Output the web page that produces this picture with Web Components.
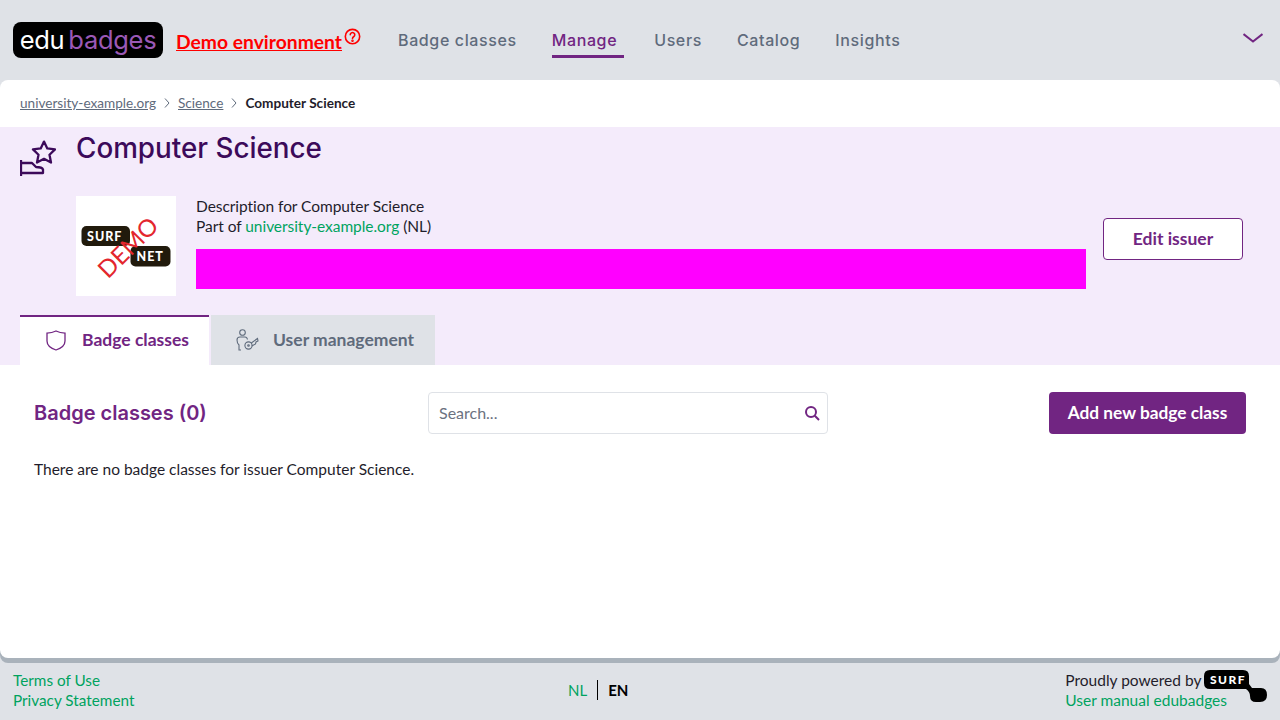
<!DOCTYPE html>
<html lang="en">
<head>
<meta charset="utf-8">
<title>edubadges</title>
<style>
  html, body { margin: 0; height: 100%; }
  body { background: #dfe2e7; font-family: Lato, sans-serif; color: #1f1d2b; }
</style>
</head>
<body>
<eb-app>
  <eb-header slot="header"></eb-header>
  <eb-breadcrumb slot="main"></eb-breadcrumb>
  <eb-hero slot="main"></eb-hero>
  <eb-badge-list slot="main"></eb-badge-list>
  <eb-footer slot="footer"></eb-footer>
</eb-app>

<script>
const BODY_FONT = 'Lato, sans-serif';
const HEAD_FONT = 'Inter, sans-serif';

// helper, every element has the same shadow setup
class Base extends HTMLElement {
  constructor() {
    super();
    this.attachShadow({ mode: 'open' });
  }
  connectedCallback() {
    this.shadowRoot.innerHTML = this.render();
  }
}

class EbApp extends Base {
  render() {
    return `
      <style>
        :host { display: flex; flex-direction: column; height: 100vh; overflow: hidden; }
        main {
          flex: 1; display: flex; flex-direction: column; min-height: 0;
          background: #fff; border-radius: 8px; box-shadow: 0 5px 0 #a9b2bb;
        }
      </style>
      <slot name="header"></slot>
      <main><slot name="main"></slot></main>
      <slot name="footer"></slot>
    `;
  }
}

class EbHeader extends Base {
  render() {
    const items = ['Badge classes', 'Manage', 'Users', 'Catalog', 'Insights'];
    return `
      <style>
        :host { display: flex; align-items: center; height: 80px; padding: 0 17px 0 13px; flex: none; }
        .logo {
          width: 150px; height: 36px; background: #000; border-radius: 8px; box-sizing: border-box;
          display: flex; align-items: center; justify-content: center; gap: 4px;
          font: 400 25.5px/36px ${HEAD_FONT}; letter-spacing: -.3px;
        }
        .logo b { font-weight: 400; color: #fff; }
        .logo i { font-style: normal; color: #9b59b6; }
        .demo {
          margin-left: 13px; width: 184px; display: flex; align-items: flex-start; padding-top: 3px;
          font: 700 19.3px/26px ${BODY_FONT}; color: #f00;
        }
        .demo span { text-decoration: underline; white-space: nowrap; }
        .demo svg { margin: -1px 0 0 2px; flex: none; }
        nav { display: flex; gap: 35px; margin-left: 38px; }
        nav a {
          font: 500 16px/22px ${HEAD_FONT}; letter-spacing: .62px; color: #5f6b7c;
          padding: 0 0 4px; border-bottom: 3px solid transparent; margin-top: 7px;
        }
        nav a.on { color: #712582; border-color: #712582; padding-right: 7px; margin-right: -5px; }
        .chev { margin-left: auto; margin-top: -5px; }
      </style>
      <div class="logo"><b>edu</b><i>badges</i></div>
      <div class="demo"><span>Demo environment</span>
        <svg width="17" height="17" viewBox="0 0 18 18" fill="none" stroke="#f00" stroke-width="1.7">
          <circle cx="9" cy="9" r="7.6"/>
          <path d="M6.6 7.2a2.4 2.4 0 1 1 3.6 2.1c-.8.5-1.2.9-1.2 1.8" stroke-linecap="round"/>
          <circle cx="9" cy="13.4" r=".5" fill="#f00"/>
        </svg>
      </div>
      <nav>${items.map(t => `<a class="${t === 'Manage' ? 'on' : ''}">${t}</a>`).join('')}</nav>
      <svg class="chev" width="20" height="10" viewBox="0 0 20 10" fill="none" stroke="#712582" stroke-width="2">
        <path d="M0.5 1 L10 8.5 L19.5 1"/>
      </svg>
    `;
  }
}

class EbBreadcrumb extends Base {
  render() {
    const chev = `<svg width="6" height="10" viewBox="0 0 6 10" fill="none" stroke="#5f6b7c" stroke-width="1"><path d="M1 .5 L5 5 L1 9.5"/></svg>`;
    return `
      <style>
        :host {
          display: flex; align-items: center; gap: 8px; height: 46px; padding: 0 20px 1px; flex: none;
          font: 400 13.6px/16px ${BODY_FONT}; color: #5f6b7c;
        }
        a { text-decoration: underline; }
        b { color: #1f1d2b; font-weight: 700; }
      </style>
      <a>university-example.org</a>${chev}<a>Science</a>${chev}<b>Computer Science</b>
    `;
  }
}

class EbHero extends Base {
  render() {
    return `
      <style>
        :host { display: block; background: #f4ebfb; height: 238px; flex: none; }
        .head { display: flex; height: 69px; padding-left: 20px; }
        .head svg { margin-top: 13px; }
        h1 { margin: 3px 0 0 20px; font: 500 27.8px/36px ${HEAD_FONT}; color: #3c0a5a; }
        .body { display: flex; padding: 0 37px 0 76px; height: 100px; gap: 20px; }
        .logo { width: 100px; height: 100px; background: #fff; flex: none; }
        .info { flex: 1; font: 400 15.5px/20px ${BODY_FONT}; letter-spacing: -.05px; }
        .info a { color: #00a35f; }
        .mag { height: 40px; background: #f0f; margin-top: 13px; }
        .edit {
          flex: none; width: 140px; height: 42px; box-sizing: border-box; margin: 22px 0 0 -3px;
          background: #fff; border: 1px solid #712582; border-radius: 4px; color: #712582;
          font: 700 17.5px/40px ${BODY_FONT}; text-align: center;
        }
        .tabs { display: flex; gap: 2px; padding: 19px 0 0 20px; }
        .tab {
          height: 50px; box-sizing: border-box; display: flex; align-items: center;
          font: 700 17.5px/22px ${BODY_FONT};
        }
        .tab.on { width: 189px; background: #fff; border-top: 2px solid #712582; color: #712582; padding: 0 0 2px 26px; gap: 16px; }
        .tab.off { width: 224px; background: #dfe2e7; color: #5f6b7c; padding-left: 25px; gap: 14px; }
      </style>
      <div class="head">
        <svg width="36" height="38" viewBox="0 0 36 38" fill="none" stroke="#3c0a5a" stroke-width="2.3" stroke-linejoin="round">
          <path d="M24 1.6 L27.3 8.4 L35 9.4 L29.5 14.8 L31 22.5 L24 18.8 L17 22.5 L18.5 14.8 L13 9.4 L20.7 8.4 Z"/>
          <path d="M1 20 V36 M1 23 H12 L16 27 Q22 27 23 29.5 V33 H1"/>
        </svg>
        <h1>Computer Science</h1>
      </div>
      <div class="body">
        <svg class="logo" viewBox="0 0 100 100">
          <rect x="5.5" y="30" width="48.5" height="20" rx="5" fill="#211a0c"/>
          <rect x="54.5" y="50" width="40" height="20.5" rx="5" fill="#211a0c"/>
          <text x="11" y="44.5" font-family="Lato, sans-serif" font-weight="900" font-size="12.5" letter-spacing="1" fill="#fff">SURF</text>
          <text x="60.5" y="64.7" font-family="Lato, sans-serif" font-weight="900" font-size="12.5" letter-spacing="1" fill="#fff">NET</text>
          <text transform="translate(32 83.5) rotate(-45)" font-family="Lato, sans-serif" font-size="24" fill="#e3262e">DEMO</text>
        </svg>
        <div class="info">
          Description for Computer Science<br>
          Part of <a>university-example.org</a> (NL)
          <div class="mag"></div>
        </div>
        <div class="edit">Edit issuer</div>
      </div>
      <div class="tabs">
        <div class="tab on">
          <svg width="20" height="21" viewBox="0 0 20 21" fill="none" stroke="#712582" stroke-width="1.3">
            <path d="M1 3.2 Q6 3 10 1 Q14 3 19 3.2 V11 Q19 17 10 20 Q1 17 1 11 Z"/>
          </svg>
          Badge classes
        </div>
        <div class="tab off">
          <svg width="23" height="22" viewBox="0 0 23 22" fill="none" stroke="#5f6b7c" stroke-width="1.1">
            <circle cx="6.5" cy="3.5" r="2.8"/>
            <path d="M5 21 H3 V16 Q1 14 1 11 Q1 8 4 8 H9 Q11 8 11.5 10.5"/>
            <circle cx="12.5" cy="16.5" r="3.6"/>
            <circle cx="12.5" cy="16.5" r=".8"/>
            <path d="M15.3 14 L21.5 9.5 L22 12 L20 13 L19.5 15 L15.8 17"/>
          </svg>
          User management
        </div>
      </div>
    `;
  }
}

class EbBadgeList extends Base {
  render() {
    return `
      <style>
        :host { display: block; flex: 1; padding: 27px 34px 0; font: 400 15.5px/20px ${BODY_FONT}; color: #1f1d2b; }
        .bar { display: flex; align-items: center; height: 42px; }
        h2 { margin: 0; width: 394px; font: 600 20px/28px ${HEAD_FONT}; color: #712582; }
        .search {
          width: 400px; height: 42px; box-sizing: border-box; border: 1px solid #dfe2e7; border-radius: 4px;
          display: flex; align-items: center; justify-content: space-between; padding: 0 7px 0 10px;
          color: #6b7280; font-size: 16px;
        }
        .add {
          margin-left: auto; width: 197px; height: 42px; border-radius: 4px; background: #712582; color: #fff;
          font: 700 17.3px/42px ${BODY_FONT}; text-align: center;
        }
        p { margin: 25px 0 0; }
      </style>
      <div class="bar">
        <h2>Badge classes (0)</h2>
        <div class="search">Search...
          <svg width="16" height="16" viewBox="0 0 16 16" fill="none" stroke="#712582" stroke-width="2">
            <circle cx="7" cy="7" r="5"/><path d="M10.8 10.8 L15 15"/>
          </svg>
        </div>
        <div class="add">Add new badge class</div>
      </div>
      <p>There are no badge classes for issuer Computer Science.</p>
    `;
  }
}

class EbFooter extends Base {
  render() {
    return `
      <style>
        :host {
          display: flex; align-items: center; flex: none;
          height: 57px; margin-top: 5px; padding: 0 53px 3px 13px; box-sizing: border-box;
          font: 400 15.5px/20px ${BODY_FONT};
        }
        a { color: #00a35f; display: block; }
        .links { width: 555px; font-size: 15.3px; }
        .lang { display: flex; align-items: center; height: 20px; font-size: 15px; }
        .lang a { padding-right: 10px; border-right: 1px solid #000; line-height: 20px; }
        .lang b { padding-left: 10px; color: #000; }
        .right { margin-left: auto; position: relative; }
        .powered { color: #1f1d2b; }
        .right svg { position: absolute; left: 139px; top: 0; }
      </style>
      <div class="links"><a>Terms of Use</a><a>Privacy Statement</a></div>
      <div class="lang"><a>NL</a><b>EN</b></div>
      <div class="right">
        <div class="powered">Proudly powered by</div>
        <a>User manual edubadges</a>
        <svg width="63" height="32" viewBox="0 0 63 32">
          <path d="M6 0 H39 Q45 0 45 6 V14 L48 18 H57 Q63 18 63 25 Q63 32 56 32 H52 Q46 32 46 26 Q46 22 42 19 H6 Q0 19 0 13 V6 Q0 0 6 0 Z" fill="#000"/>
          <text x="6" y="13.7" font-family="Lato, sans-serif" font-weight="900" font-size="12" letter-spacing="1.5" fill="#fff">SURF</text>
        </svg>
      </div>
    `;
  }
}

customElements.define('eb-app', EbApp);
customElements.define('eb-header', EbHeader);
customElements.define('eb-breadcrumb', EbBreadcrumb);
customElements.define('eb-hero', EbHero);
customElements.define('eb-badge-list', EbBadgeList);
customElements.define('eb-footer', EbFooter);
</script>
</body>
</html>
